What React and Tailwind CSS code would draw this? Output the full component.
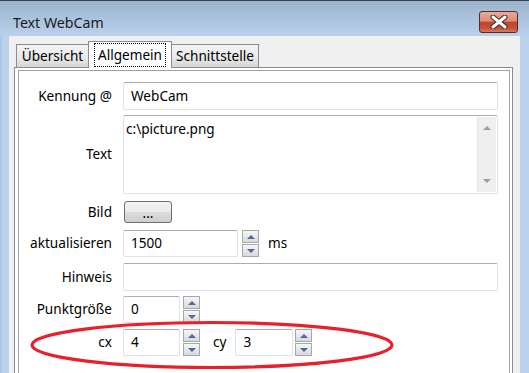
import React from 'react';

const font = "font-['Noto_Sans',sans-serif]";

// small up/down arrow used by the spin buttons
const Arrow = ({ up, color = '#4f67a6' }) => (
    <svg width="8" height="4" viewBox="0 0 8 4">
        <path d={up ? 'M0 4 L4 0 L8 4 Z' : 'M0 0 L4 4 L8 0 Z'} fill={color} />
    </svg>
);

const SpinButton = ({ up }) => (
    <div className="flex-1 flex items-center justify-center border border-[#a7a7a7] bg-gradient-to-b from-[#f7f7f7] to-[#d9d9d9]">
        <Arrow up={up} />
    </div>
);

const Spin = ({ className = '' }) => (
    <div className={`flex flex-col gap-[1px] h-[27px] w-[17px] ${className}`}>
        <SpinButton up />
        <SpinButton />
    </div>
);

const TextBox = ({ value, className = '' }) => (
    <div
        className={`h-full flex items-center pl-[7px] bg-white border border-[#dde1e8] border-t-[#abadb3] rounded-[2px] ${className}`}
    >
        {value}
    </div>
);

const Label = ({ children }) => (
    <div className="w-[93px] shrink-0 pr-0 text-right">{children}</div>
);

const CloseButton = () => (
    <div className="ml-auto mr-[11px] mt-[10px] w-[39px] h-[22px] rounded-[3px] border border-[#5e2a25] bg-[linear-gradient(#e9aa9b,#dc8a77_45%,#c4442b_52%,#c6503a_80%,#d77a61)] flex items-center justify-center">
        <svg width="20" height="14" viewBox="0 0 20 14">
            <path d="M4 2 L16 12 M16 2 L4 12" stroke="#3a2a2a" strokeWidth="5" strokeLinecap="round" />
            <path d="M4 2 L16 12 M16 2 L4 12" stroke="#ffffff" strokeWidth="3" strokeLinecap="round" />
        </svg>
    </div>
);

export default function App() {
    return (
        <div className={`relative w-[529px] h-[373px] overflow-hidden bg-[#bad2eb] text-black ${font}`}>
            {/* title bar */}
            <div className="h-[36px] flex border-t border-[#3b4048] bg-gradient-to-b from-[#9db4cf] to-[#b9d1eb]">
                <span className="ml-[13px] mt-[12px] text-[14.2px] leading-[20px] text-[#1b1b1b]">Text WebCam</span>
                <CloseButton />
            </div>

            <div className="flex h-[337px]">
                <div className="w-[9px] border-l-2 border-[#adc7e4]" />

                {/* dialog client area */}
                <div className="w-[511px] bg-[#f0f0f0] pl-[5px] pt-[5px] text-[13.6px]">
                    {/* tabs */}
                    <div className="flex items-end h-[26px] pl-[2px]">
                        <div className="w-[73px] h-[23px] flex items-center justify-center border border-b-0 border-[#898c95] bg-gradient-to-b from-[#f3f3f3] via-[#ebebeb] to-[#d6d6d6]">
                            Übersicht
                        </div>
                        <div className="relative z-10 -ml-px w-[84px] h-[27px] -mb-px flex items-start justify-center pt-[1px] border border-b-0 border-[#898c95] bg-white">
                            <span className="px-[3px] h-[24px] flex items-center border border-dotted border-black">
                                Allgemein
                            </span>
                        </div>
                        <div className="-ml-px w-[88px] h-[23px] flex items-center justify-center border border-b-0 border-[#898c95] bg-gradient-to-b from-[#f3f3f3] via-[#ebebeb] to-[#d6d6d6]">
                            Schnittstelle
                        </div>
                    </div>

                    {/* tab panel */}
                    <div className="w-[499px] h-[320px] border border-[#898c95] bg-white pl-[3px] pr-[2px] pt-[2px]">
                        <div className="h-full border border-b-0 border-[#a0a0a0] pt-[11px] flex flex-col">
                            <div className="flex items-center h-[28px] gap-[11px]">
                                <Label>Kennung @</Label>
                                <TextBox value="WebCam" className="w-[375px]" />
                            </div>

                            <div className="flex items-center h-[79px] mt-[5px] gap-[11px]">
                                <Label>Text</Label>
                                <div className="w-[375px] h-full flex bg-white border border-[#dde1e8] border-t-[#abadb3] rounded-[2px]">
                                    <div className="flex-1 pl-[2px] pt-[3px] leading-[20px]">c:\picture.png</div>
                                    <div className="w-[19px] my-[1px] mr-[1px] bg-[#efefef] border-l border-[#e6e6e6] flex flex-col items-center justify-between py-[9px]">
                                        <Arrow up color="#9e9e9e" />
                                        <Arrow color="#9e9e9e" />
                                    </div>
                                </div>
                            </div>

                            <div className="flex items-center h-[28px] mt-[4px] gap-[11px]">
                                <Label>Bild</Label>
                                <div className="ml-[1px] w-[48px] h-[22px] rounded-[3px] border border-[#707070] bg-[linear-gradient(#f2f2f2,#ebebeb_50%,#dddddd_50%,#cfcfcf)] flex items-end justify-center pb-[3px] leading-[12px]">
                                    ...
                                </div>
                            </div>

                            <div className="flex items-center h-[27px] mt-[4px]">
                                <Label>aktualisieren</Label>
                                <TextBox value="1500" className="ml-[11px] w-[115px]" />
                                <Spin className="ml-[4px] w-[16px]" />
                                <span className="ml-[9px]">ms</span>
                            </div>

                            <div className="flex items-center h-[28px] mt-[6px] gap-[11px]">
                                <Label>Hinweis</Label>
                                <TextBox value="" className="w-[375px]" />
                            </div>

                            <div className="flex items-center h-[27px] mt-[5px]">
                                <Label>Punktgröße</Label>
                                <TextBox value="0" className="ml-[11px] w-[57px]" />
                                <Spin className="ml-[3px]" />
                            </div>

                            <div className="flex items-center h-[27px] mt-[6px]">
                                <Label>cx</Label>
                                <TextBox value="4" className="ml-[11px] w-[57px]" />
                                <Spin className="ml-[3px]" />
                                <span className="ml-[13px]">cy</span>
                                <TextBox value="3" className="ml-[9px] w-[58px] pl-[6px]" />
                                <Spin className="ml-[2px]" />
                            </div>
                        </div>
                    </div>
                </div>

                <div className="w-[9px]" />
            </div>

            {/* red annotation drawn over the dialog */}
            <svg className="absolute left-0 top-0 pointer-events-none" width="529" height="373">
                <ellipse cx="212" cy="345" rx="180" ry="22.5" fill="none" stroke="#e8202a" strokeWidth="3.2" />
            </svg>
        </div>
    );
}
